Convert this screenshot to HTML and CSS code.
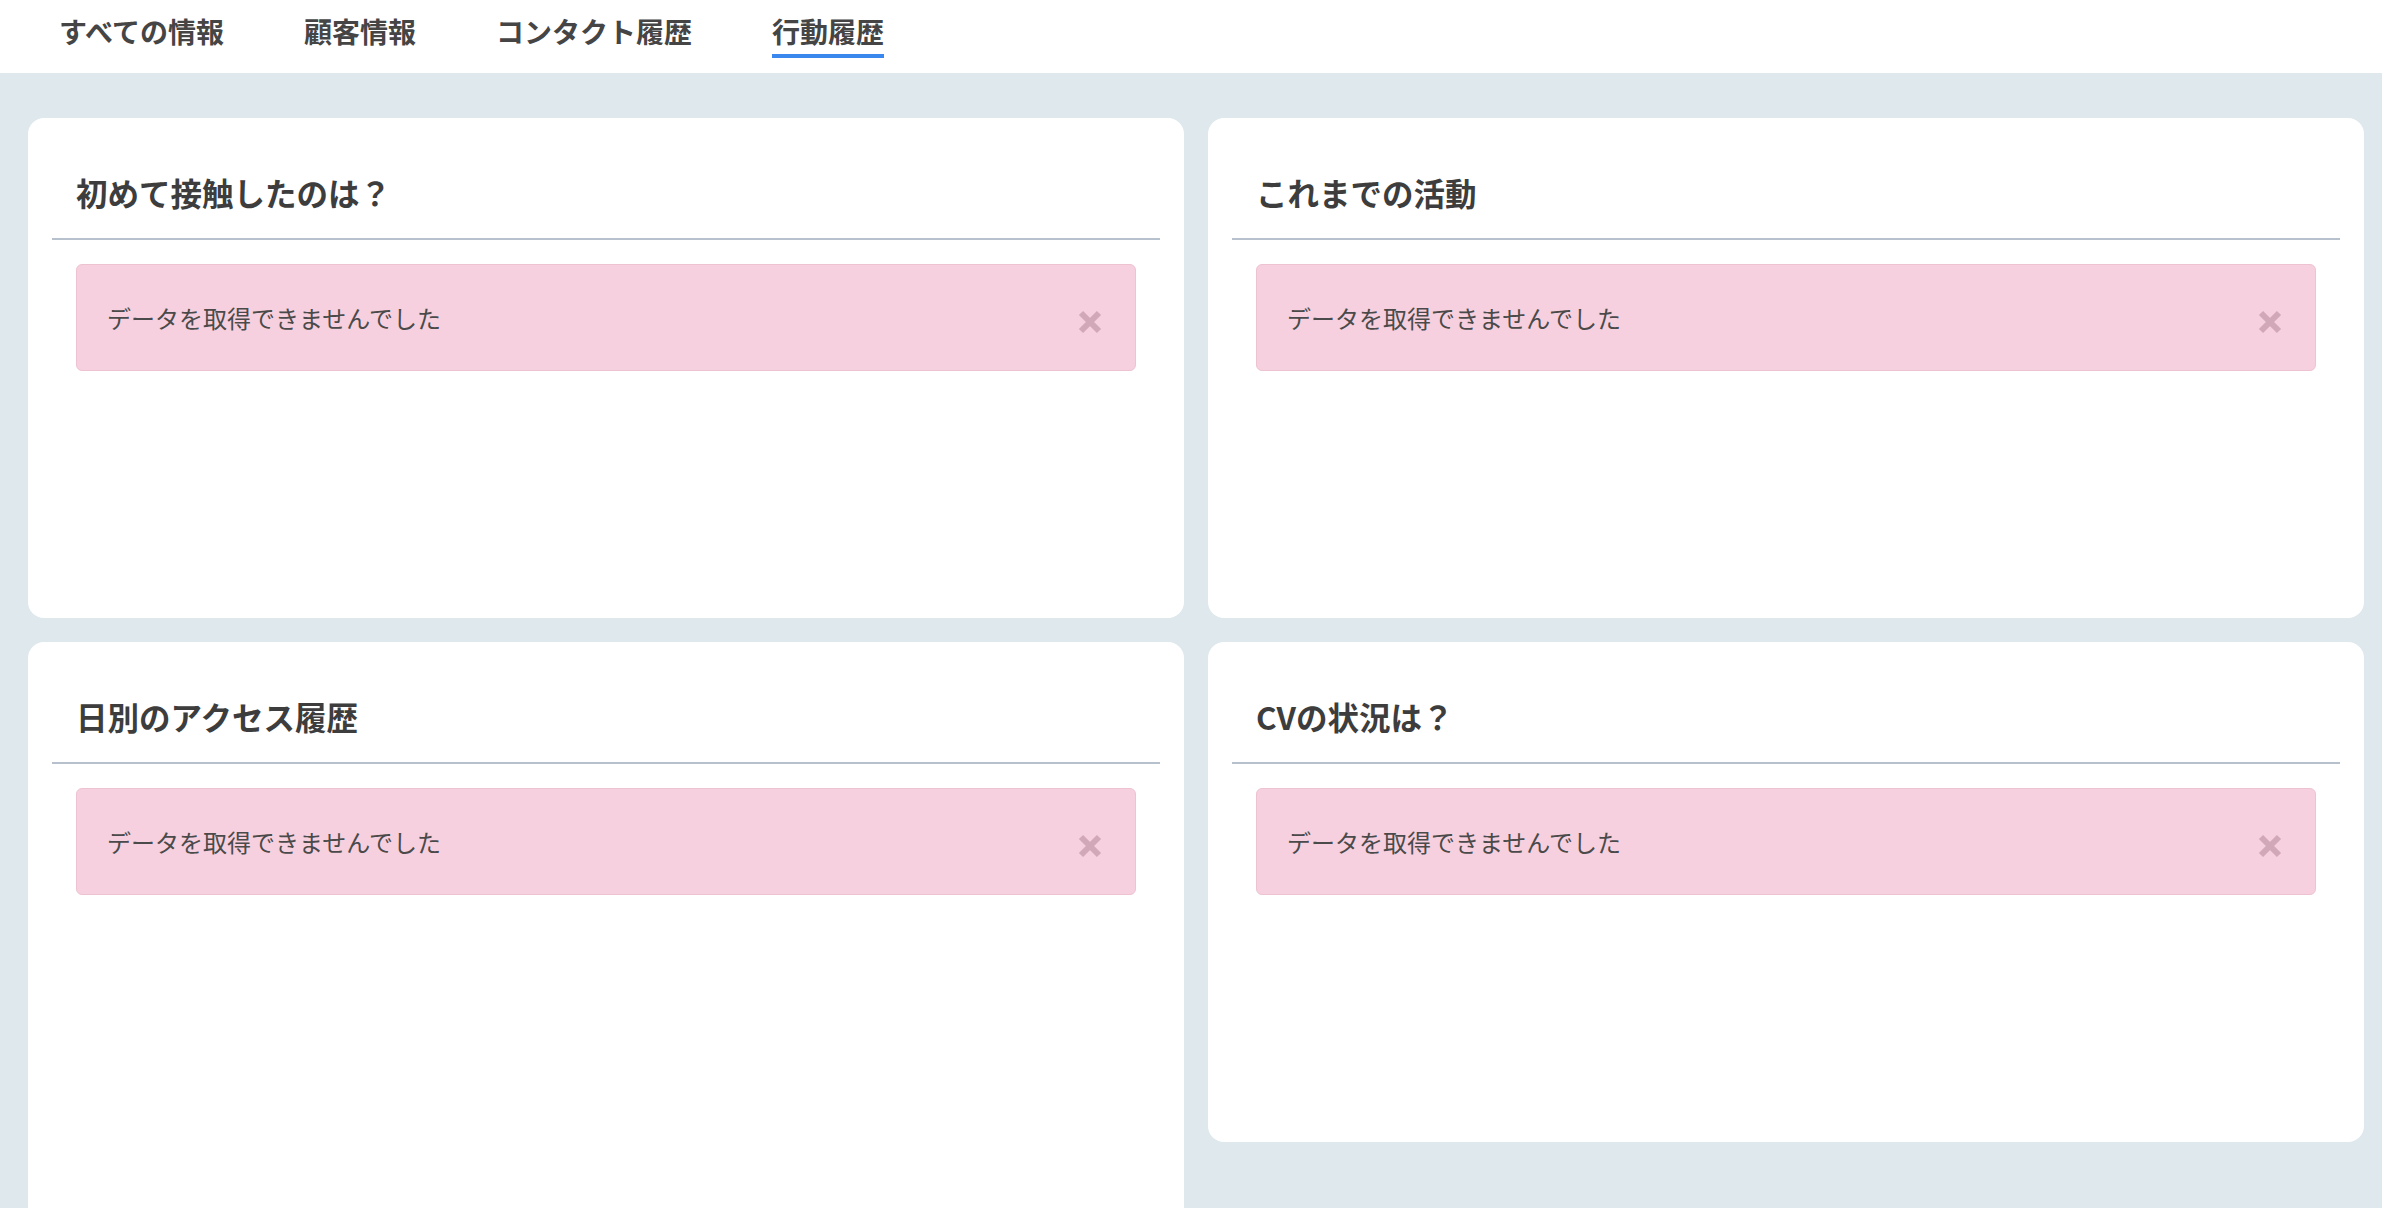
FILE: index.html
```html
<!DOCTYPE html>
<html lang="ja">
<head>
<meta charset="utf-8">
<title>行動履歴</title>
<link rel="stylesheet" href="styles.css">
</head>
<body>
<header class="tabs">
  <a class="tab">すべての情報</a>
  <a class="tab">顧客情報</a>
  <a class="tab">コンタクト履歴</a>
  <a class="tab is-active">行動履歴</a>
</header>

<main class="board">
  <section class="card">
    <div class="card-head"><h2 class="card-title">初めて接触したのは？</h2></div>
    <div class="card-body">
      <div class="alert">
        <span class="alert-text">データを取得できませんでした</span>
        <button class="alert-close" aria-label="閉じる">
          <svg viewBox="0 0 24 24" width="24" height="24"><path d="M3 3L21 21M21 3L3 21" /></svg>
        </button>
      </div>
    </div>
  </section>

  <section class="card">
    <div class="card-head"><h2 class="card-title">これまでの活動</h2></div>
    <div class="card-body">
      <div class="alert">
        <span class="alert-text">データを取得できませんでした</span>
        <button class="alert-close" aria-label="閉じる">
          <svg viewBox="0 0 24 24" width="24" height="24"><path d="M3 3L21 21M21 3L3 21" /></svg>
        </button>
      </div>
    </div>
  </section>

  <section class="card card-tall">
    <div class="card-head"><h2 class="card-title">日別のアクセス履歴</h2></div>
    <div class="card-body">
      <div class="alert">
        <span class="alert-text">データを取得できませんでした</span>
        <button class="alert-close" aria-label="閉じる">
          <svg viewBox="0 0 24 24" width="24" height="24"><path d="M3 3L21 21M21 3L3 21" /></svg>
        </button>
      </div>
    </div>
  </section>

  <section class="card">
    <div class="card-head"><h2 class="card-title">CVの状況は？</h2></div>
    <div class="card-body">
      <div class="alert">
        <span class="alert-text">データを取得できませんでした</span>
        <button class="alert-close" aria-label="閉じる">
          <svg viewBox="0 0 24 24" width="24" height="24"><path d="M3 3L21 21M21 3L3 21" /></svg>
        </button>
      </div>
    </div>
  </section>
</main>
</body>
</html>
```

FILE: styles.css
```css
* {
  box-sizing: border-box;
}

html,
body {
  margin: 0;
  padding: 0;
}

body {
  background: #dee8ed;
  font-family: "Noto Sans CJK JP", "Noto Sans", sans-serif;
  color: #444;
  height: 100vh;
  overflow: hidden;
}

/* top tab bar */
.tabs {
  height: 73px;
  background: #fff;
  display: flex;
  align-items: flex-start;
  gap: 80px;
  padding-left: 59px;
}

.tab {
  display: block;
  padding-top: 17px;
  padding-bottom: 9px;
  border-bottom: 4px solid transparent;
  font-size: 28px;
  line-height: 28px;
  font-weight: 700;
  color: #454545;
  cursor: pointer;
}

.tab.is-active {
  border-bottom-color: #3a87ee;
}

/* card grid */
.board {
  display: grid;
  grid-template-columns: 1fr 1fr;
  gap: 24px;
  align-items: start;
  padding: 45px 18px 0 28px;
}

.card {
  background: #fff;
  border-radius: 16px;
  height: 500px;
}

.card-tall {
  height: 640px;
}

.card-head {
  margin: 0 24px;
  padding: 56px 24px 28px;
  border-bottom: 2px solid #b7c1ce;
}

.card-title {
  margin: 0;
  font-size: 31.5px;
  line-height: 36px;
  font-weight: 700;
  color: #3d3d3d;
}

.card-body {
  padding: 24px 48px 0;
}

/* error notice */
.alert {
  display: flex;
  align-items: center;
  justify-content: space-between;
  height: 107px;
  padding: 0 33px 0 30px;
  background: #f6d0de;
  border: 1px solid #eec3d1;
  border-radius: 6px;
}

.alert-text {
  font-size: 24px;
  line-height: 34px;
  color: #4a4a4a;
}

.alert-close {
  display: flex;
  margin-top: 8px;
  padding: 0;
  border: 0;
  background: none;
  cursor: pointer;
}

.alert-close path {
  fill: none;
  stroke: #d0a8b7;
  stroke-width: 6;
}
```
